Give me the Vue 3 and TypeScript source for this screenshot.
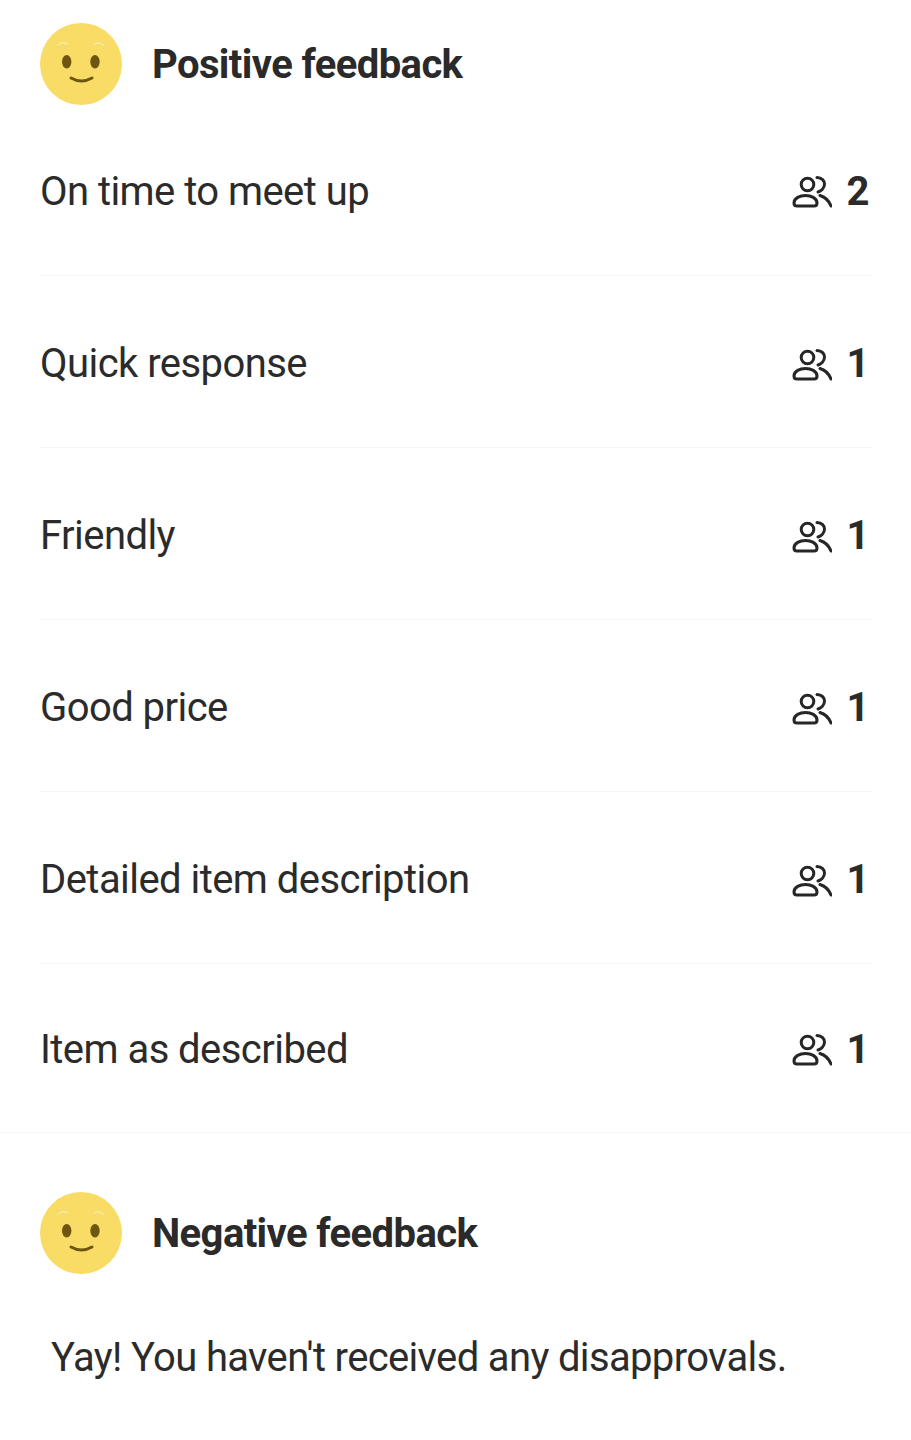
<script setup lang="ts">
interface FeedbackRow {
  label: string
  count: number
}

const rows: FeedbackRow[] = [
  { label: "On time to meet up", count: 2 },
  { label: "Quick response", count: 1 },
  { label: "Friendly", count: 1 },
  { label: "Good price", count: 1 },
  { label: "Detailed item description", count: 1 },
  { label: "Item as described", count: 1 },
];
</script>

<template>
  <div class="page">
    <section class="positive">
      <header class="head">
        <svg class="face" viewBox="0 0 82 82">
          <circle cx="41" cy="41" r="41" fill="#f8dc66" />
          <path d="M18 22q4-4 9-1M55 21q4-3 8 1" fill="none" stroke="#f5e9a8" stroke-width="1.6" stroke-linecap="round" />
          <ellipse cx="26.700" cy="38.700" rx="4.700" ry="6.700" fill="#6e5510" />
          <ellipse cx="55" cy="38.700" rx="4.700" ry="6.700" fill="#6e5510" />
          <path d="M31 55q10.500 6 21 0" fill="none" stroke="#6e5510" stroke-width="3" stroke-linecap="round" />
        </svg>
        <h2 class="title">Positive feedback</h2>
      </header>
      <ul class="list">
        <li v-for="row in rows" :key="row.label" class="row">
          <span class="label">{{ row.label }}</span>
          <span class="stat">
            <svg class="people" viewBox="0 0 40 34" fill="none" stroke="#262626" stroke-width="3" stroke-linecap="round">
              <circle cx="15.500" cy="10.500" r="6.300" />
              <path d="M25 3.500C30 3.500 32.500 7 32.500 10 32.500 14 29 17 26 18" />
              <path d="M2 29C2 24 8 21.500 13.500 21.500S25 24 25 29c0 2-1 3-3 3H5C3 32 2 31 2 29z" />
              <path d="M28 21.500C33 23 37 27 39 32" />
            </svg>
            <b class="count">{{ row.count }}</b>
          </span>
        </li>
      </ul>
    </section>
    <section class="negative">
      <header class="head">
        <svg class="face" viewBox="0 0 82 82">
          <circle cx="41" cy="41" r="41" fill="#f8dc66" />
          <path d="M18 22q4-4 9-1M55 21q4-3 8 1" fill="none" stroke="#f5e9a8" stroke-width="1.6" stroke-linecap="round" />
          <ellipse cx="26.700" cy="38.700" rx="4.700" ry="6.700" fill="#6e5510" />
          <ellipse cx="55" cy="38.700" rx="4.700" ry="6.700" fill="#6e5510" />
          <path d="M31 55q10.500 6 21 0" fill="none" stroke="#6e5510" stroke-width="3" stroke-linecap="round" />
        </svg>
        <h2 class="title">Negative feedback</h2>
      </header>
      <p class="empty">Yay! You haven't received any disapprovals.</p>
    </section>
  </div>
</template>

<style>
html,
body {
  background: #fff;
}
</style>

<style scoped>
.page {
  height: 1440px;
  overflow: hidden;
  background: #fff;
  color: #2b2b2b;
  font-family: Roboto, "Liberation Sans", sans-serif;
}
.positive {
  border-bottom: 1px solid #f5f5f3;
}
.head {
  display: flex;
  align-items: center;
  gap: 30px;
  padding: 23px 40px 0;
}
.face {
  width: 82px;
  height: 82px;
  flex: none;
}
.title {
  margin: 0;
  font-size: 40px;
  font-weight: 700;
  letter-spacing: -0.6px;
  color: #2a2a2a;
}
.list {
  margin: 0;
  padding: 0 40px;
  list-style: none;
}
.row {
  display: flex;
  align-items: center;
  justify-content: space-between;
  height: 171px;
  padding-top: 2px;
  box-sizing: border-box;
  border-bottom: 1px solid #f5f5f3;
}
.row:nth-child(n + 2) {
  height: 172px;
  padding-top: 4px;
}
.row:last-child {
  height: 168px;
  padding-top: 2px;
  border-bottom: 0;
}
.label {
  font-size: 40px;
  letter-spacing: -0.55px;
}
.stat {
  display: flex;
  align-items: center;
  gap: 14px;
  margin-right: 1px;
}
.people {
  width: 40px;
  height: 34px;
}
.count {
  width: 24px;
  font-size: 40px;
  font-weight: 700;
  text-align: center;
}
.negative .head {
  padding-top: 59px;
}
.empty {
  margin: 60px 0 0;
  padding-left: 51px;
  font-size: 40px;
  letter-spacing: -0.65px;
}
</style>
